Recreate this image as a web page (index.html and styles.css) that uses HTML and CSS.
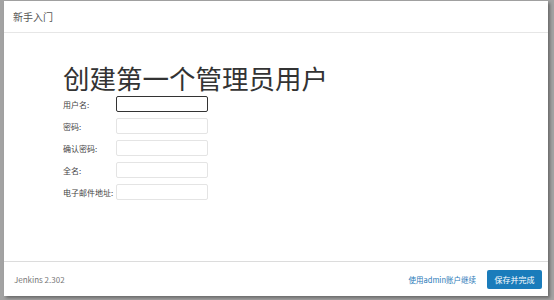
FILE: index.html
```html
<!DOCTYPE html>
<html lang="zh-CN">
<head>
	<meta charset="utf-8">
	<title>新手入门</title>
	<link rel="stylesheet" href="styles.css">
</head>
<body>
	<div class="dialog">
		<div class="dialog-header">新手入门</div>
		<div class="dialog-body">
			<h1>创建第一个管理员用户</h1>
			<div class="form">
				<div class="row"><label>用户名:</label><input class="field focused" type="text"></div>
				<div class="row"><label>密码:</label><input class="field" type="password"></div>
				<div class="row"><label>确认密码:</label><input class="field" type="password"></div>
				<div class="row"><label>全名:</label><input class="field" type="text"></div>
				<div class="row"><label>电子邮件地址:</label><input class="field" type="text"></div>
			</div>
		</div>
		<div class="dialog-footer">
			<span class="version">Jenkins 2.302</span>
			<a class="skip" href="#">使用admin账户继续</a>
			<button class="save">保存并完成</button>
		</div>
	</div>
</body>
</html>
```
FILE: styles.css
```css
html, body {
	height: 100%;
}

body {
	margin: 0;
	padding: 1px 6px 4px 4px;
	box-sizing: border-box;
	background-color: #a3a3a3;
	font-family: "Noto Sans CJK SC", "Noto Sans", sans-serif;
	color: #333;
}

.dialog {
	height: 100%;
	background: #fff;
	display: flex;
	flex-direction: column;
	box-shadow: 2px 2px 3px rgba(0, 0, 0, 0.35);
}

.dialog-header {
	height: 31px;
	border-bottom: 1px solid #e6e6e6;
	padding-left: 9px;
	display: flex;
	align-items: center;
	font-size: 10px;
	color: #555;
}

.dialog-body {
	flex: 1;
	padding: 30px 0 0 59px;
}

h1 {
	margin: 0 0 3px 0;
	font-size: 26.5px;
	line-height: 30px;
	font-weight: normal;
	color: #333;
}

.form {
	display: flex;
	flex-direction: column;
	gap: 6px;
}

.row {
	display: flex;
	align-items: center;
}

.row label {
	width: 53px;
	font-size: 8px;
	color: #444;
}

.field {
	width: 92px;
	height: 16px;
	box-sizing: border-box;
	margin: 0;
	padding: 0 3px;
	border: 1px solid #e4e4e4;
	border-radius: 2px;
	outline: none;
}

.field.focused {
	border-color: #333;
	border-width: 1.5px;
}

.dialog-footer {
	height: 34px;
	border-top: 1px solid #dcdcdc;
	display: flex;
	align-items: center;
	padding: 0 6px 0 10px;
}

.version {
	font-size: 8px;
	color: #777;
	flex: 1;
}

.skip {
	font-size: 7.5px;
	color: #2a7ab8;
	text-decoration: none;
	margin-right: 11px;
}

.save {
	height: 19px;
	width: 55px;
	padding: 0;
	border: none;
	border-radius: 2px;
	background: #1a7cbb;
	color: #fff;
	font-family: inherit;
	font-size: 8px;
}
```
